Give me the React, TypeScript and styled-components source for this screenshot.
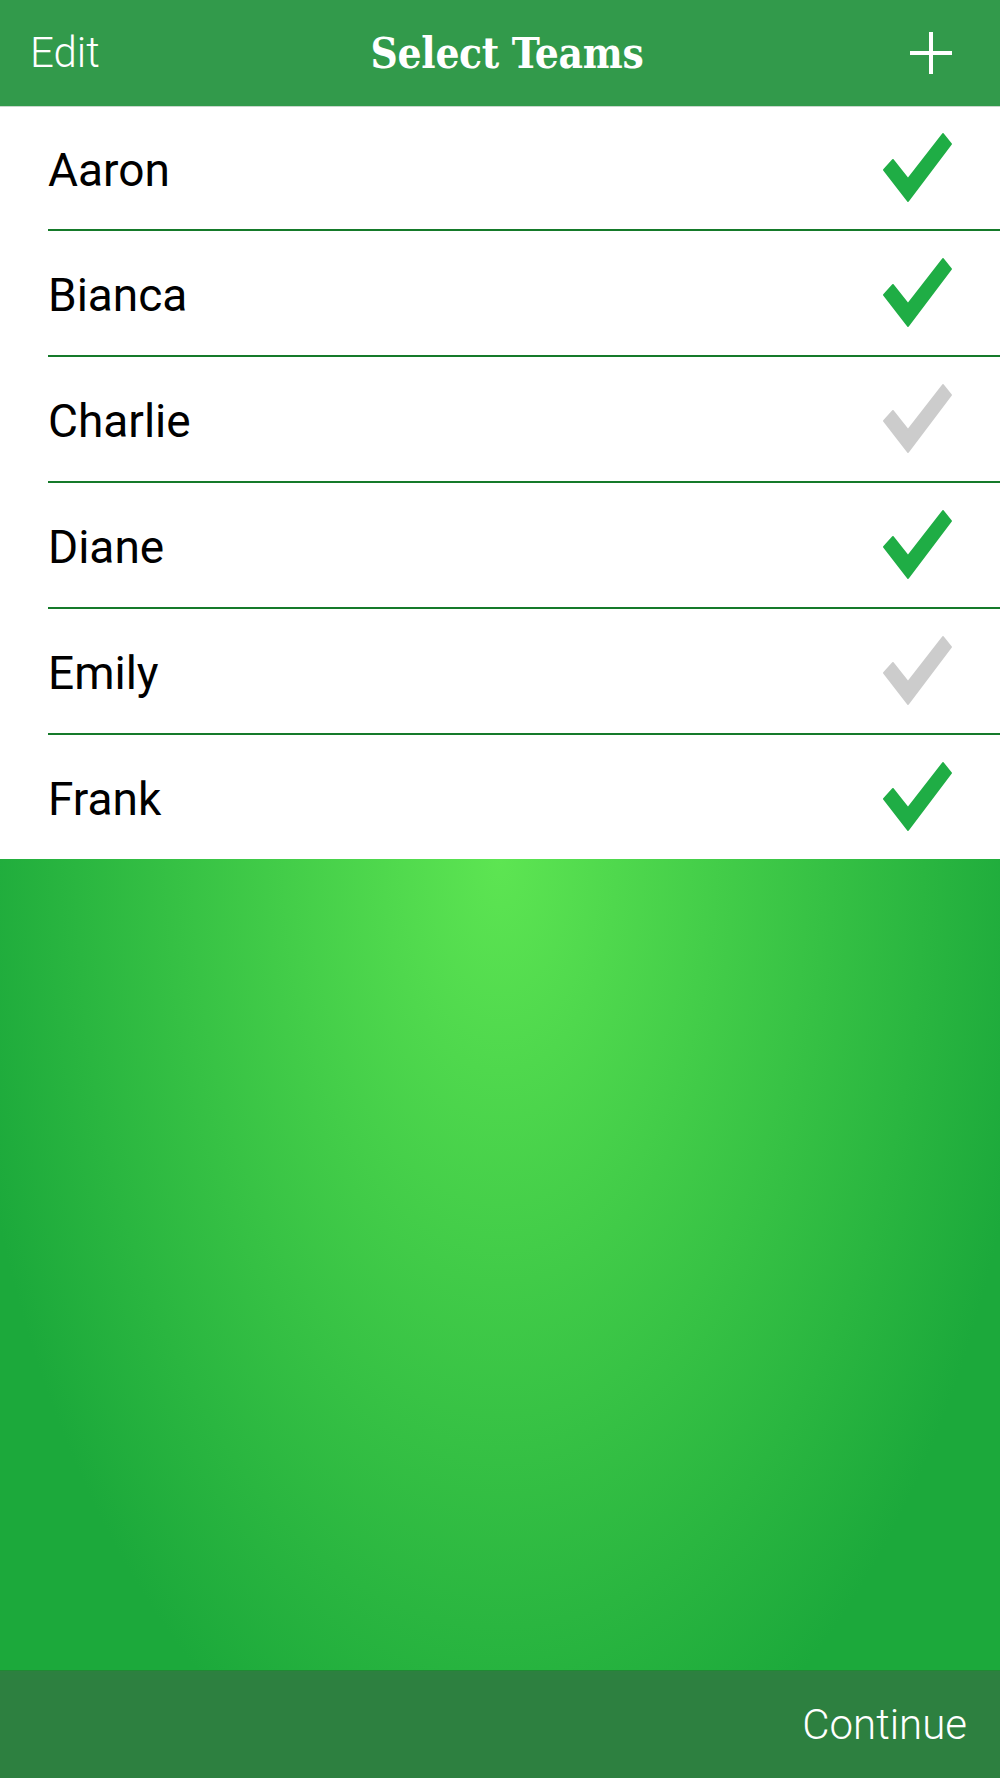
import styled, { createGlobalStyle } from 'styled-components';

const GlobalStyle = createGlobalStyle`
  html, body {
    margin: 0;
    padding: 0;
    background: #ffffff;
  }
  body {
    font-family: Roboto, 'Liberation Sans', sans-serif;
  }
`;

const Screen = styled.div`
  width: 1000px;
  height: 1778px;
  display: flex;
  flex-direction: column;
  overflow: hidden;
`;

const NavBar = styled.header`
  height: 106px;
  flex-shrink: 0;
  display: grid;
  grid-template-columns: 1fr auto 1fr;
  align-items: center;
  padding: 0 48px 0 30px;
  background-color: #329a4b;
  border-bottom: 1px solid #c9d8cc;
  color: #ffffff;
`;

const NavButton = styled.button<{ $align?: 'left' | 'right' }>`
  justify-self: ${(p) => (p.$align === 'right' ? 'end' : 'start')};
  background: none;
  border: none;
  padding: 0;
  color: #ffffff;
  font-family: Roboto, 'Liberation Sans', sans-serif;
  font-weight: 300;
  font-size: 42px;
  line-height: 1;
  display: flex;
  align-items: center;
  cursor: pointer;
`;

const Title = styled.h1`
  margin: 0 0 0 32px;
  font-family: 'DejaVu Serif', serif;
  font-stretch: condensed;
  font-weight: bold;
  font-size: 42px;
  letter-spacing: -0.3px;
`;

const TeamList = styled.ul`
  list-style: none;
  margin: 0;
  padding: 0;
  background: #ffffff;
  flex-shrink: 0;
`;

const TeamRow = styled.li`
  height: 124px;
  display: flex;
  align-items: center;
  justify-content: space-between;
  margin-left: 48px;
  padding-right: 44px;
  border-bottom: 2px solid #157a2a;

  &:first-child {
    height: 122px;
  }
  &:last-child {
    border-bottom: none;
  }
`;

const TeamName = styled.span`
  font-family: Roboto, 'Liberation Sans', sans-serif;
  font-size: 46px;
  color: #000000;
  padding-top: 3px;
`;

const Field = styled.main`
  flex: 1;
  background: radial-gradient(ellipse 540px 980px at 50% 0%, #5de552 0%, #1ca93b 100%);
`;

const BottomBar = styled.footer`
  height: 107px;
  flex-shrink: 0;
  display: flex;
  align-items: center;
  justify-content: flex-end;
  padding-right: 33px;
  background-color: #2d8040;
  border-top: 1px solid #208a33;
`;

const teams = [
  { name: 'Aaron', selected: true },
  { name: 'Bianca', selected: true },
  { name: 'Charlie', selected: false },
  { name: 'Diane', selected: true },
  { name: 'Emily', selected: false },
  { name: 'Frank', selected: true },
];

const Check = ({ on }: { on: boolean }) => (
  <svg width="76" height="80" viewBox="0 0 76 80">
    <polygon
      points="13,32 28,51 63,6 71,16 28,73 4,42"
      fill={on ? '#1fad45' : '#cccccc'}
      strokeLinejoin="round"
      stroke={on ? '#1fad45' : '#cccccc'}
      strokeWidth="2"
    />
  </svg>
);

const PlusIcon = () => (
  <svg width="42" height="42" viewBox="0 0 42 42">
    <rect x="19" y="0" width="4" height="42" fill="#ffffff" />
    <rect x="0" y="19" width="42" height="4" fill="#ffffff" />
  </svg>
);

export default function App() {
  return (
    <>
      <GlobalStyle />
      <Screen>
        <NavBar>
          <NavButton>Edit</NavButton>
          <Title>Select Teams</Title>
          <NavButton $align="right">
            <PlusIcon />
          </NavButton>
        </NavBar>
        <TeamList>
          {teams.map((t) => (
            <TeamRow key={t.name}>
              <TeamName>{t.name}</TeamName>
              <Check on={t.selected} />
            </TeamRow>
          ))}
        </TeamList>
        <Field />
        <BottomBar>
          <NavButton $align="right">Continue</NavButton>
        </BottomBar>
      </Screen>
    </>
  );
}
